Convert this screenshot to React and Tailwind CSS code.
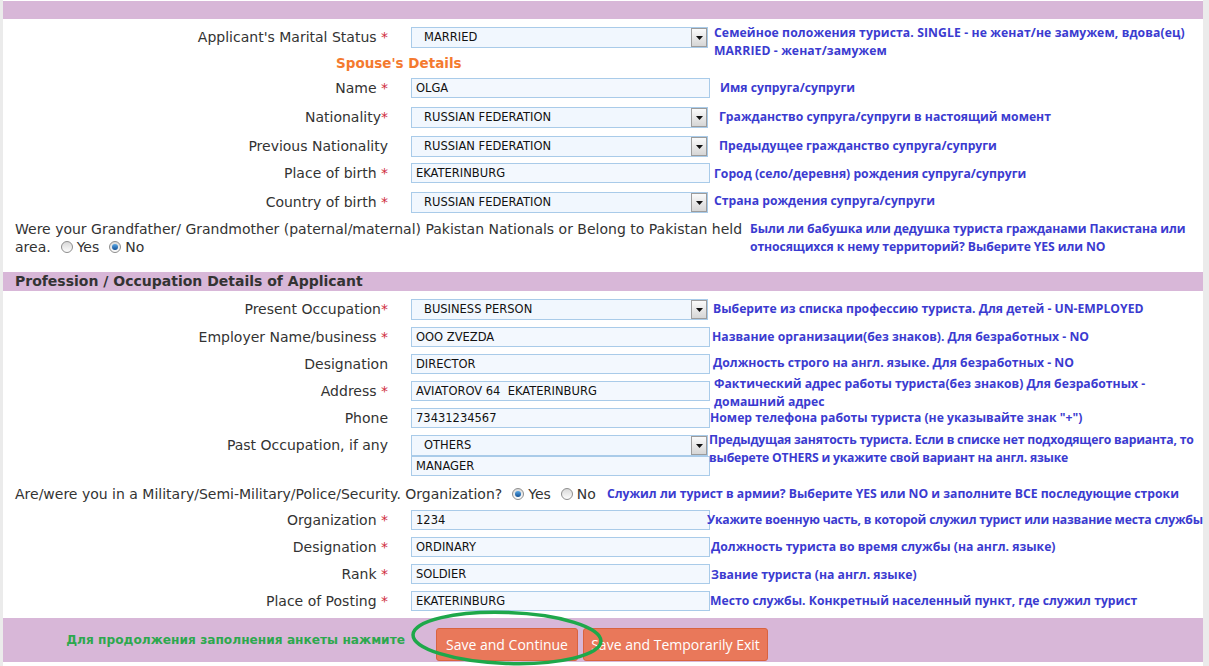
import React from "react";

const HELP =
  "font-['Open_Sans','Noto_Sans',sans-serif] font-bold text-[12.2px] leading-[18px] text-[#3b3bd0] whitespace-nowrap";
const TEXT = "font-['DejaVu_Sans',Verdana,sans-serif] text-[14px] text-[#333]";

function Arrow() {
  return (
    <span className="w-[16px] h-[19px] border border-[#9c9c9c] bg-linear-to-b from-[#fbfbfb] to-[#d6d6d6] flex items-center justify-center">
      <svg width="7" height="4" viewBox="0 0 7 4">
        <path d="M0 0h7L3.5 4z" fill="#111" />
      </svg>
    </span>
  );
}

function Select({ value }) {
  return (
    <div className="w-[297px] h-[21px] border border-[#a9cbe9] bg-[#f1f7fe] flex items-center justify-between">
      <span className="pl-[12px] pt-[1px] text-[11.5px] text-[#111] font-['DejaVu_Sans',sans-serif]">{value}</span>
      <Arrow />
    </div>
  );
}

function Input({ value }) {
  return (
    <div className="w-[299px] h-[20px] border border-[#a9cbe9] bg-[#f3f8fe] flex items-center">
      <span className="pl-[4px] pt-[2px] text-[11.5px] text-[#111] whitespace-pre font-['DejaVu_Sans',sans-serif]">{value}</span>
    </div>
  );
}

function Radio({ checked }) {
  return (
    <span className="relative inline-block w-[12px] h-[12px] rounded-full border border-[#8d8d8d] bg-linear-to-b from-[#d9d9d9] to-[#fdfdfd]">
      {checked && (
        <span className="absolute left-[2px] top-[2px] w-[6px] h-[6px] rounded-full bg-linear-to-b from-[#5aa8e6] to-[#0f4f94]" />
      )}
    </span>
  );
}

function Row({ h, label, star, field, help, helpCls = "ml-[6px] pt-[7px]" }) {
  return (
    <div className={`flex items-start shrink-0 ${h}`}>
      <div className={`w-[385px] shrink-0 pt-[6px] text-right leading-[20px] ${TEXT}`}>
        {label}
        {star && <span className="text-[#cf2b3d]">{star}</span>}
      </div>
      <div className="ml-[23px] shrink-0 pt-[6px] flex flex-col">{field}</div>
      <div className={`${HELP} ${helpCls}`}>{help}</div>
    </div>
  );
}

export default function App() {
  return (
    <div className="w-[1209px] h-[666px] overflow-hidden flex bg-[#ebebeb]">
      <div className="relative ml-[3px] w-[1200px] h-full bg-white flex flex-col">
        <div className="mt-[1px] h-[18px] bg-[#d8b7d8] shrink-0" />

        <div className="mt-[2px]">
          <Row
            h="h-[33px]"
            label="Applicant's Marital Status"
            star=" *"
            field={<Select value="MARRIED" />}
            helpCls="ml-[6px] pt-[3px] tracking-[0.1px]"
            help={
              <>
                Семейное положения туриста. SINGLE - не женат/не замужем, вдова(ец)
                <br />
                MARRIED - женат/замужем
              </>
            }
          />
        </div>

        <div className="h-[18px] shrink-0 pl-[333px] leading-[18px] font-['DejaVu_Sans',Verdana,sans-serif] font-bold text-[13.5px] text-[#f47a2f]">
          Spouse's Details
        </div>

        <Row h="h-[29px]" label="Name" star=" *" field={<Input value="OLGA" />} helpCls="ml-[10px] pt-[7px]" help="Имя супруга/супруги" />
        <Row h="h-[29px]" label="Nationality" star="*" field={<Select value="RUSSIAN FEDERATION" />} helpCls="ml-[11px] pt-[7px]" help="Гражданство супруга/супруги в настоящий момент" />
        <Row h="h-[27px]" label="Previous Nationality" field={<Select value="RUSSIAN FEDERATION" />} helpCls="ml-[11px] pt-[7px]" help="Предыдущее гражданство супруга/супруги" />
        <Row h="h-[29px]" label="Place of birth" star=" *" field={<Input value="EKATERINBURG" />} helpCls="ml-[4px] pt-[8px]" help="Город (село/деревня) рождения супруга/супруги" />
        <Row h="h-[34px]" label="Country of birth" star=" *" field={<Select value="RUSSIAN FEDERATION" />} helpCls="ml-[6px] pt-[6px]" help="Страна рождения супруга/супруги" />

        <div className="h-[52px] shrink-0 flex items-start">
          <div className={`w-[735px] shrink-0 pl-[12px] leading-[18px] whitespace-nowrap ${TEXT}`}>
            Were your Grandfather/ Grandmother (paternal/maternal) Pakistan Nationals or Belong to Pakistan held
            <div className="flex items-center h-[18px]">
              area.
              <span className="ml-[10px] flex"><Radio /></span>
              <span className="ml-[4px]">Yes</span>
              <span className="ml-[10px] flex"><Radio checked /></span>
              <span className="ml-[4px]">No</span>
            </div>
          </div>
          <div className={`${HELP} ml-[12px] tracking-[-0.1px]`}>
            Были ли бабушка или дедушка туриста гражданами Пакистана или
            <br />
            относящихся к нему территорий? Выберите YES или NO
          </div>
        </div>

        <div className="h-[19px] shrink-0 bg-[#d8b7d8] pl-[12px] leading-[19px] font-['DejaVu_Sans',Verdana,sans-serif] font-bold text-[14px] text-[#333]">
          Profession / Occupation Details of Applicant
        </div>

        <div className="mt-[2px]">
          <Row h="h-[28px]" label="Present Occupation" star="*" field={<Select value="BUSINESS PERSON" />} helpCls="ml-[5px] pt-[7px]" help="Выберите из списка профессию туриста. Для детей - UN-EMPLOYED" />
        </div>
        <Row h="h-[27px]" label="Employer Name/business" star=" *" field={<Input value="OOO ZVEZDA" />} helpCls="ml-[2px] pt-[7px]" help="Название организации(без знаков). Для безработных - NO" />
        <Row h="h-[27px]" label="Designation" field={<Input value="DIRECTOR" />} helpCls="ml-[3px] pt-[6px]" help="Должность строго на англ. языке. Для безработных - NO" />
        <Row
          h="h-[27px]"
          label="Address"
          star=" *"
          field={<Input value="AVIATOROV 64  EKATERINBURG" />}
          helpCls="ml-[4px] pt-0"
          help={
            <>
              Фактический адрес работы туриста(без знаков) Для безработных -
              <br />
              домашний адрес
            </>
          }
        />
        <Row h="h-[27px]" label="Phone" field={<Input value="73431234567" />} helpCls="ml-[0px] pt-[7px]" help='Номер телефона работы туриста (не указывайте знак "+")' />
        <Row
          h="h-[55px]"
          label="Past Occupation, if any"
          field={
            <>
              <Select value="OTHERS" />
              <Input value="MANAGER" />
            </>
          }
          helpCls="ml-[-1px] pt-[2px] tracking-[-0.2px]"
          help={
            <>
              Предыдущая занятость туриста. Если в списке нет подходящего варианта, то
              <br />
              выберете OTHERS и укажите свой вариант на англ. языке
            </>
          }
        />

        <div className={`h-[20px] shrink-0 flex items-center pl-[12px] whitespace-nowrap ${TEXT}`}>
          Are/were you in a Military/Semi-Military/Police/Security. Organization?
          <span className="ml-[10px] flex"><Radio checked /></span>
          <span className="ml-[4px]">Yes</span>
          <span className="ml-[10px] flex"><Radio /></span>
          <span className="ml-[4px]">No</span>
          <span className={`${HELP} ml-[11px]`}>
            Служил ли турист в армии? Выберите YES или NO и заполните ВСЕ последующие строки
          </span>
        </div>

        <Row h="h-[27px]" label="Organization" star=" *" field={<Input value="1234" />} helpCls="ml-[-3px] pt-[7px] tracking-[-0.2px]" help="Укажите военную часть, в которой служил турист или название места службы" />
        <Row h="h-[27px]" label="Designation" star=" *" field={<Input value="ORDINARY" />} helpCls="ml-[1px] pt-[7px]" help="Должность туриста во время службы (на англ. языке)" />
        <Row h="h-[27px]" label="Rank" star=" *" field={<Input value="SOLDIER" />} helpCls="ml-[1px] pt-[8px]" help="Звание туриста (на англ. языке)" />
        <Row h="h-[33px]" label="Place of Posting" star=" *" field={<Input value="EKATERINBURG" />} helpCls="ml-[0px] pt-[7px]" help="Место службы. Конкретный населенный пункт, где служил турист" />

        <div className="h-[44px] shrink-0 bg-[#d8b7d8] flex items-start">
          <div className="w-[402px] shrink-0 h-full flex items-center justify-end whitespace-nowrap font-['DejaVu_Sans',Verdana,sans-serif] font-bold text-[12.2px] text-[#2da84e]">
            Для продолжения заполнения анкеты нажмите
          </div>
          <button className="ml-[31px] mt-[10px] w-[142px] h-[33px] rounded-[3px] border border-[#d9633f] bg-[#e9785a] text-white text-[14px] font-['Open_Sans',sans-serif]">
            Save and Continue
          </button>
          <button className="ml-[5px] mt-[10px] w-[185px] h-[33px] rounded-[3px] border border-[#d9633f] bg-[#e9785a] text-white text-[14px] font-['Open_Sans',sans-serif]">
            Save and Temporarily Exit
          </button>
        </div>

        <svg
          className="absolute left-[402px] top-[606px] pointer-events-none"
          width="204"
          height="64"
          viewBox="0 0 204 64"
        >
          <ellipse
            cx="102"
            cy="32"
            rx="94"
            ry="25.5"
            fill="none"
            stroke="#1ea84a"
            strokeWidth="3.5"
            transform="rotate(2 102 32)"
          />
        </svg>
      </div>
    </div>
  );
}
